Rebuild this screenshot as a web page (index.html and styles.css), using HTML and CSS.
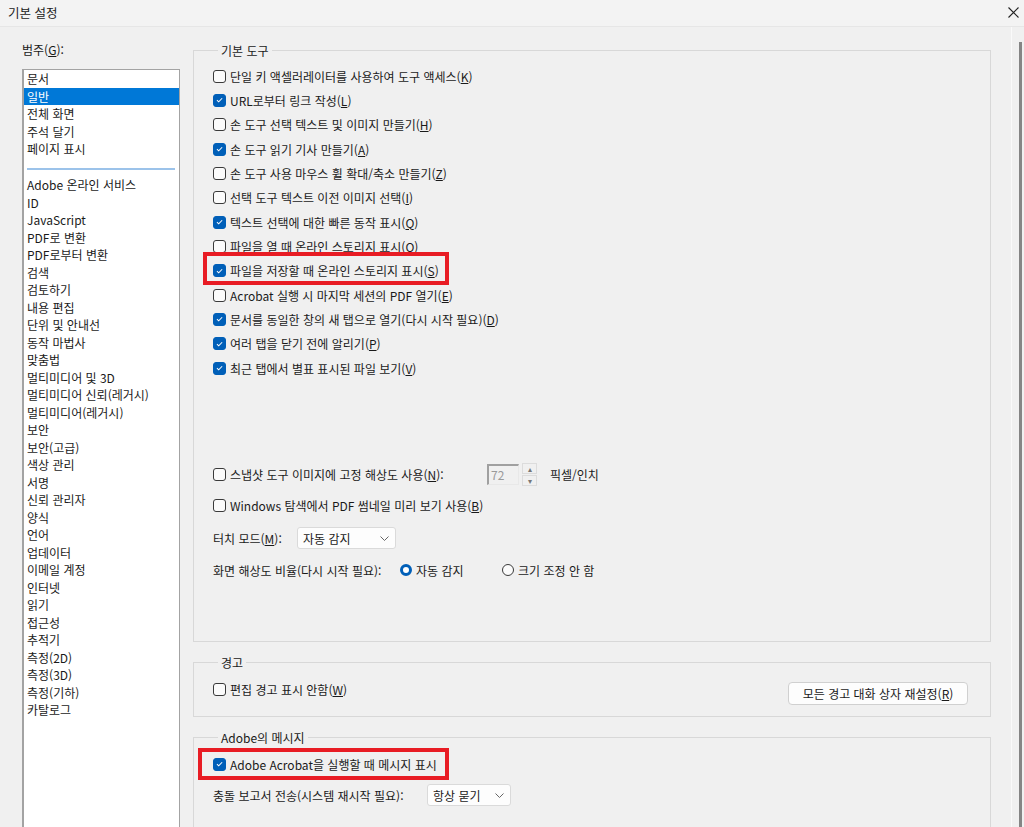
FILE: index.html
```html
<!DOCTYPE html>
<html lang="ko">
<head>
<meta charset="utf-8">
<title>기본 설정</title>
<link rel="stylesheet" href="styles.css">
</head>
<body>
<div class="titlebar">
  <span class="title">기본 설정</span>
  <svg class="close" width="11" height="11" viewBox="0 0 11 11"><path d="M0.5 0.5 L10.5 10.5 M10.5 0.5 L0.5 10.5" stroke="#222" stroke-width="1.1" fill="none"/></svg>
</div>
<div class="main">
  <div class="leftcol">
    <div class="catlabel">범주(<u>G</u>):</div>
    <div class="listbox">
      <div class="item">문서</div>
      <div class="item selected">일반</div>
      <div class="item">전체 화면</div>
      <div class="item">주석 달기</div>
      <div class="item">페이지 표시</div>
      <div class="sep"><div class="sepline"></div></div>
      <div class="item">Adobe 온라인 서비스</div>
      <div class="item">ID</div>
      <div class="item">JavaScript</div>
      <div class="item">PDF로 변환</div>
      <div class="item">PDF로부터 변환</div>
      <div class="item">검색</div>
      <div class="item">검토하기</div>
      <div class="item">내용 편집</div>
      <div class="item">단위 및 안내선</div>
      <div class="item">동작 마법사</div>
      <div class="item">맞춤법</div>
      <div class="item">멀티미디어 및 3D</div>
      <div class="item">멀티미디어 신뢰(레거시)</div>
      <div class="item">멀티미디어(레거시)</div>
      <div class="item">보안</div>
      <div class="item">보안(고급)</div>
      <div class="item">색상 관리</div>
      <div class="item">서명</div>
      <div class="item">신뢰 관리자</div>
      <div class="item">양식</div>
      <div class="item">언어</div>
      <div class="item">업데이터</div>
      <div class="item">이메일 계정</div>
      <div class="item">인터넷</div>
      <div class="item">읽기</div>
      <div class="item">접근성</div>
      <div class="item">추적기</div>
      <div class="item">측정(2D)</div>
      <div class="item">측정(3D)</div>
      <div class="item">측정(기하)</div>
      <div class="item">카탈로그</div>
    </div>
  </div>

  <div class="rightcol">
    <fieldset class="group g1">
      <legend>기본 도구</legend>
      <div class="row"><span class="chk"><span class="cb"></span><span class="lbl">단일 키 액셀러레이터를 사용하여 도구 액세스(<u>K</u>)</span></span></div>
      <div class="row"><span class="chk"><span class="cb on"><svg viewBox="0 0 12 12"><path d="M3.2 6.2 L5.1 8 L8.9 4.1"/></svg></span><span class="lbl">URL로부터 링크 작성(<u>L</u>)</span></span></div>
      <div class="row"><span class="chk"><span class="cb"></span><span class="lbl">손 도구 선택 텍스트 및 이미지 만들기(<u>H</u>)</span></span></div>
      <div class="row"><span class="chk"><span class="cb on"><svg viewBox="0 0 12 12"><path d="M3.2 6.2 L5.1 8 L8.9 4.1"/></svg></span><span class="lbl">손 도구 읽기 기사 만들기(<u>A</u>)</span></span></div>
      <div class="row"><span class="chk"><span class="cb"></span><span class="lbl">손 도구 사용 마우스 휠 확대/축소 만들기(<u>Z</u>)</span></span></div>
      <div class="row"><span class="chk"><span class="cb"></span><span class="lbl">선택 도구 텍스트 이전 이미지 선택(<u>I</u>)</span></span></div>
      <div class="row"><span class="chk"><span class="cb on"><svg viewBox="0 0 12 12"><path d="M3.2 6.2 L5.1 8 L8.9 4.1"/></svg></span><span class="lbl">텍스트 선택에 대한 빠른 동작 표시(<u>Q</u>)</span></span></div>
      <div class="row"><span class="chk"><span class="cb"></span><span class="lbl">파일을 열 때 온라인 스토리지 표시(<u>O</u>)</span></span></div>
      <div class="row"><span class="chk hl hl1"><span class="cb on"><svg viewBox="0 0 12 12"><path d="M3.2 6.2 L5.1 8 L8.9 4.1"/></svg></span><span class="lbl">파일을 저장할 때 온라인 스토리지 표시(<u>S</u>)</span></span></div>
      <div class="row"><span class="chk"><span class="cb"></span><span class="lbl">Acrobat 실행 시 마지막 세션의 PDF 열기(<u>E</u>)</span></span></div>
      <div class="row"><span class="chk"><span class="cb on"><svg viewBox="0 0 12 12"><path d="M3.2 6.2 L5.1 8 L8.9 4.1"/></svg></span><span class="lbl">문서를 동일한 창의 새 탭으로 열기(다시 시작 필요)(<u>D</u>)</span></span></div>
      <div class="row"><span class="chk"><span class="cb on"><svg viewBox="0 0 12 12"><path d="M3.2 6.2 L5.1 8 L8.9 4.1"/></svg></span><span class="lbl">여러 탭을 닫기 전에 알리기(<u>P</u>)</span></span></div>
      <div class="row"><span class="chk"><span class="cb on"><svg viewBox="0 0 12 12"><path d="M3.2 6.2 L5.1 8 L8.9 4.1"/></svg></span><span class="lbl">최근 탭에서 별표 표시된 파일 보기(<u>V</u>)</span></span></div>

      <div class="row r24 snap">
        <span class="chk snaplabel"><span class="cb"></span><span class="lbl">스냅샷 도구 이미지에 고정 해상도 사용(<u>N</u>):</span></span>
        <span class="numbox">72</span>
        <span class="spin"><span class="sbtn">▴</span><span class="sbtn">▾</span></span>
        <span class="unit">픽셀/인치</span>
      </div>
      <div class="row r24 m7"><span class="chk"><span class="cb"></span><span class="lbl">Windows 탐색에서 PDF 썸네일 미리 보기 사용(<u>B</u>)</span></span></div>
      <div class="row r24 m9">
        <span class="flabel touchlabel">터치 모드(<u>M</u>):</span>
        <span class="select touchsel"><span>자동 감지</span><svg width="9" height="5" viewBox="0 0 9 5"><path d="M0.5 0.5 L4.5 4.5 L8.5 0.5" stroke="#666" fill="none"/></svg></span>
      </div>
      <div class="row r24 m8">
        <span class="flabel scalelabel">화면 해상도 비율(다시 시작 필요):</span>
        <span class="radio-opt first"><span class="rb on"></span><span class="lbl">자동 감지</span></span>
        <span class="radio-opt"><span class="rb"></span><span class="lbl">크기 조정 안 함</span></span>
      </div>
    </fieldset>

    <fieldset class="group g2">
      <legend>경고</legend>
      <div class="warnrow">
        <div class="row r24"><span class="chk"><span class="cb"></span><span class="lbl">편집 경고 표시 안함(<u>W</u>)</span></span></div>
        <span class="button">모든 경고 대화 상자 재설정(<u>R</u>)</span>
      </div>
    </fieldset>

    <fieldset class="group g3">
      <legend>Adobe의 메시지</legend>
      <div class="row r24"><span class="chk hl hl2"><span class="cb on"><svg viewBox="0 0 12 12"><path d="M3.2 6.2 L5.1 8 L8.9 4.1"/></svg></span><span class="lbl">Adobe Acrobat을 실행할 때 메시지 표시</span></span></div>
      <div class="row r24 m7">
        <span class="flabel crashlabel">충돌 보고서 전송(시스템 재시작 필요):</span>
        <span class="select crashsel"><span>항상 묻기</span><svg width="9" height="5" viewBox="0 0 9 5"><path d="M0.5 0.5 L4.5 4.5 L8.5 0.5" stroke="#666" fill="none"/></svg></span>
      </div>
    </fieldset>
  </div>

  <div class="vscroll">
    <div class="vline"></div>
    <div class="thumb"></div>
  </div>
</div>
</body>
</html>
```
FILE: styles.css
```css
html, body {
  margin: 0;
  padding: 0;
}
body {
  width: 1024px;
  height: 827px;
  overflow: hidden;
  background: #f0f0f0;
  color: #1a1a1a;
  font-family: "Noto Sans CJK KR", "Noto Sans", sans-serif;
  font-size: 12px;
  line-height: 17px;
}
u { text-decoration: underline; text-underline-offset: 1px; }

.titlebar {
  height: 27px;
  box-sizing: border-box;
  border-bottom: 1px solid #e6e6e6;
  background: #f3f3f3;
  display: flex;
  align-items: center;
  justify-content: space-between;
  padding: 0 5px 1px 8px;
}
.title { font-size: 12.5px; }
.close { display: block; }

.main {
  display: flex;
  height: 800px;
}

.leftcol {
  width: 158px;
  margin-left: 22px;
  display: flex;
  flex-direction: column;
}
.catlabel {
  margin-top: 14px;
  height: 17px;
}
.listbox {
  margin-top: 11px;
  flex: 1;
  background: #fff;
  border: 1px solid #a3a3a3;
  border-left-width: 2px;
  border-bottom: none;
}
.item {
  height: 17.5px;
  line-height: 17.5px;
  padding-left: 3px;
  white-space: nowrap;
}
.item.selected {
  background: #0078d7;
  color: #fff;
}
.sep {
  height: 18.5px;
  box-sizing: border-box;
  padding: 10px 4px 0 3px;
}
.sepline {
  height: 2px;
  background: #9cc3ea;
}

.rightcol {
  width: 798px;
  margin-left: 13px;
}
.group {
  margin: 0;
  border: 1px solid #d8d8d8;
  padding: 0 22px 0 19px;
  min-width: 0;
}
.group legend {
  padding: 0 3px;
  margin-left: 5px;
  line-height: 17px;
}
.g1 { margin-top: 15px; padding-top: 5px; padding-bottom: 59px; }
.g2 { margin-top: 12px; padding-top: 6px; padding-bottom: 11px; }
.g3 { margin-top: 12px; padding-top: 6px; padding-bottom: 40px; }

.row {
  display: flex;
  align-items: center;
  height: 24.33px;
  white-space: nowrap;
}
.row.r24 { height: 24px; }
.row.snap { margin-top: 82px; }
.m7 { margin-top: 7px; }
.m8 { margin-top: 8px; }
.m9 { margin-top: 9px; }

.chk {
  display: inline-flex;
  align-items: center;
  height: 17px;
}
.cb {
  width: 11px;
  height: 11px;
  border: 1px solid #3a3a3a;
  border-radius: 3px;
  background: #fbfbfb;
  flex: none;
  display: flex;
  align-items: center;
  justify-content: center;
}
.cb.on {
  background: #005fb8;
  border-color: #005fb8;
}
.cb svg {
  width: 12px;
  height: 12px;
  display: block;
}
.cb svg path {
  fill: none;
  stroke: #fff;
  stroke-width: 1.1;
}
.lbl { margin-left: 4px; }

.hl {
  border: 4px solid #e81c24;
}
.hl1 {
  margin: -10px -10px -6px -10px;
  padding: 6px 6px 2px 6px;
}
.hl2 {
  margin: -8px -12px -7px -15px;
  padding: 4px 8px 3px 11px;
}

.snaplabel { width: 274px; }
.numbox {
  height: 21px;
  box-sizing: border-box;
  width: 32px;
  border: 1px solid #e8e8e8;
  border-top: 2px solid #a0a0a0;
  border-left: 2px solid #a0a0a0;
  background: #f0f0f0;
  color: #9a9a9a;
  padding-left: 2px;
  line-height: 18px;
}
.spin {
  margin-left: 3px;
  width: 15px;
  display: flex;
  flex-direction: column;
  gap: 1px;
}
.sbtn {
  height: 11px;
  box-sizing: border-box;
  border: 1px solid #dcdcdc;
  font-size: 8px;
  line-height: 9px;
  text-align: center;
  color: #777;
}
.unit { margin-left: 13px; }

.flabel { flex: none; }
.touchlabel { width: 84px; }
.scalelabel { width: 187px; }
.crashlabel { width: 214px; }

.select {
  height: 22px;
  box-sizing: border-box;
  background: #fdfdfd;
  border: 1px solid #dadada;
  border-radius: 3px;
  display: flex;
  align-items: center;
  justify-content: space-between;
  padding: 0 6px 0 5px;
}
.touchsel { width: 99px; }
.crashsel { width: 84px; }

.radio-opt {
  display: inline-flex;
  align-items: center;
}
.radio-opt.first { width: 102px; }
.rb {
  width: 12px;
  height: 12px;
  box-sizing: border-box;
  border-radius: 50%;
  border: 1px solid #3a3a3a;
  background: #fbfbfb;
}
.rb.on {
  border: 3.5px solid #005fb8;
  background: #fff;
}

.warnrow {
  display: flex;
  justify-content: space-between;
  align-items: flex-start;
}
.button {
  margin-top: 5px;
  width: 180px;
  height: 23px;
  box-sizing: border-box;
  border: 1px solid #d0d0d0;
  border-radius: 4px;
  background: #fdfdfd;
  text-align: center;
  line-height: 21px;
}

.vscroll {
  display: flex;
  margin-left: 20px;
}
.vline {
  width: 1px;
  background: #fafafa;
}
.thumb {
  margin-left: 7px;
  margin-top: 15px;
  width: 3px;
  background: #858585;
}
```
